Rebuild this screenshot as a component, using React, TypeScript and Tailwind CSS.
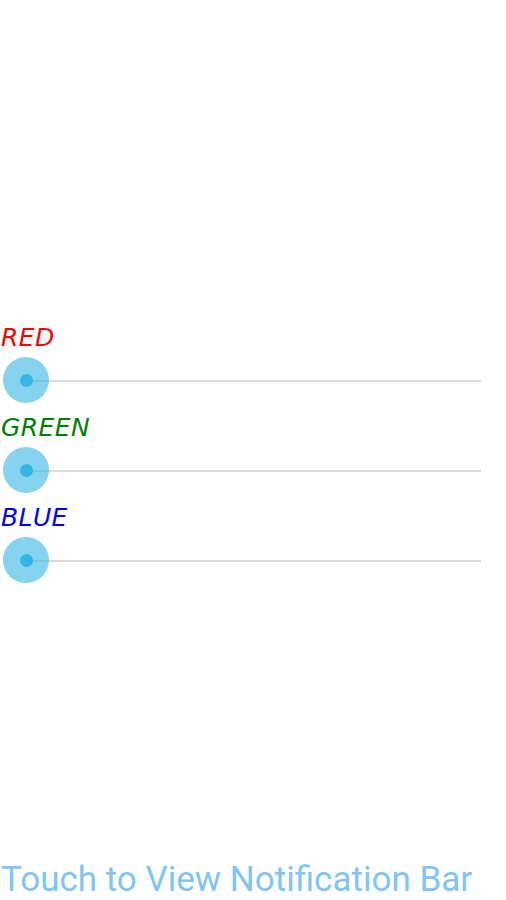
import React from "react"

type Channel = { label: string; color: string }

const channels: Channel[] = [
  { label: "RED", color: "text-[#ff0000]" },
  { label: "GREEN", color: "text-[#008000]" },
  { label: "BLUE", color: "text-[#0000ff]" },
]

function SeekBar() {
  return (
    <div className="relative h-[51px] w-[481px] flex items-center">
      <div className="ml-[26px] h-[2px] flex-1 bg-[#dcdcdc]" />
      {/* thumb sits over the track */}
      <div className="absolute left-[3px] top-[2px] w-[46px] h-[46px] rounded-full bg-[#33b5e5]/60 flex items-center justify-center">
        <div className="w-[13px] h-[13px] rounded-full bg-[#33b5e5]" />
      </div>
    </div>
  )
}

export default function App() {
  return (
    <div className="h-[900px] w-[506px] bg-white flex flex-col font-['Roboto',sans-serif] overflow-hidden">
      <div className="pt-[321px] flex flex-col">
        {channels.map((c) => (
          <div key={c.label} className="flex flex-col mb-[5px]">
            <div
              className={`font-['DejaVu_Sans',sans-serif] italic text-[25px] leading-[34px] tracking-[0.4px] pl-[1px] ${c.color}`}
            >
              {c.label}
            </div>
            <SeekBar />
          </div>
        ))}
      </div>
      <div className="mt-auto mb-0 text-[35px] leading-[40px] text-[#80c5f5] pl-[1px]">
        Touch to View Notification Bar
      </div>
    </div>
  )
}
